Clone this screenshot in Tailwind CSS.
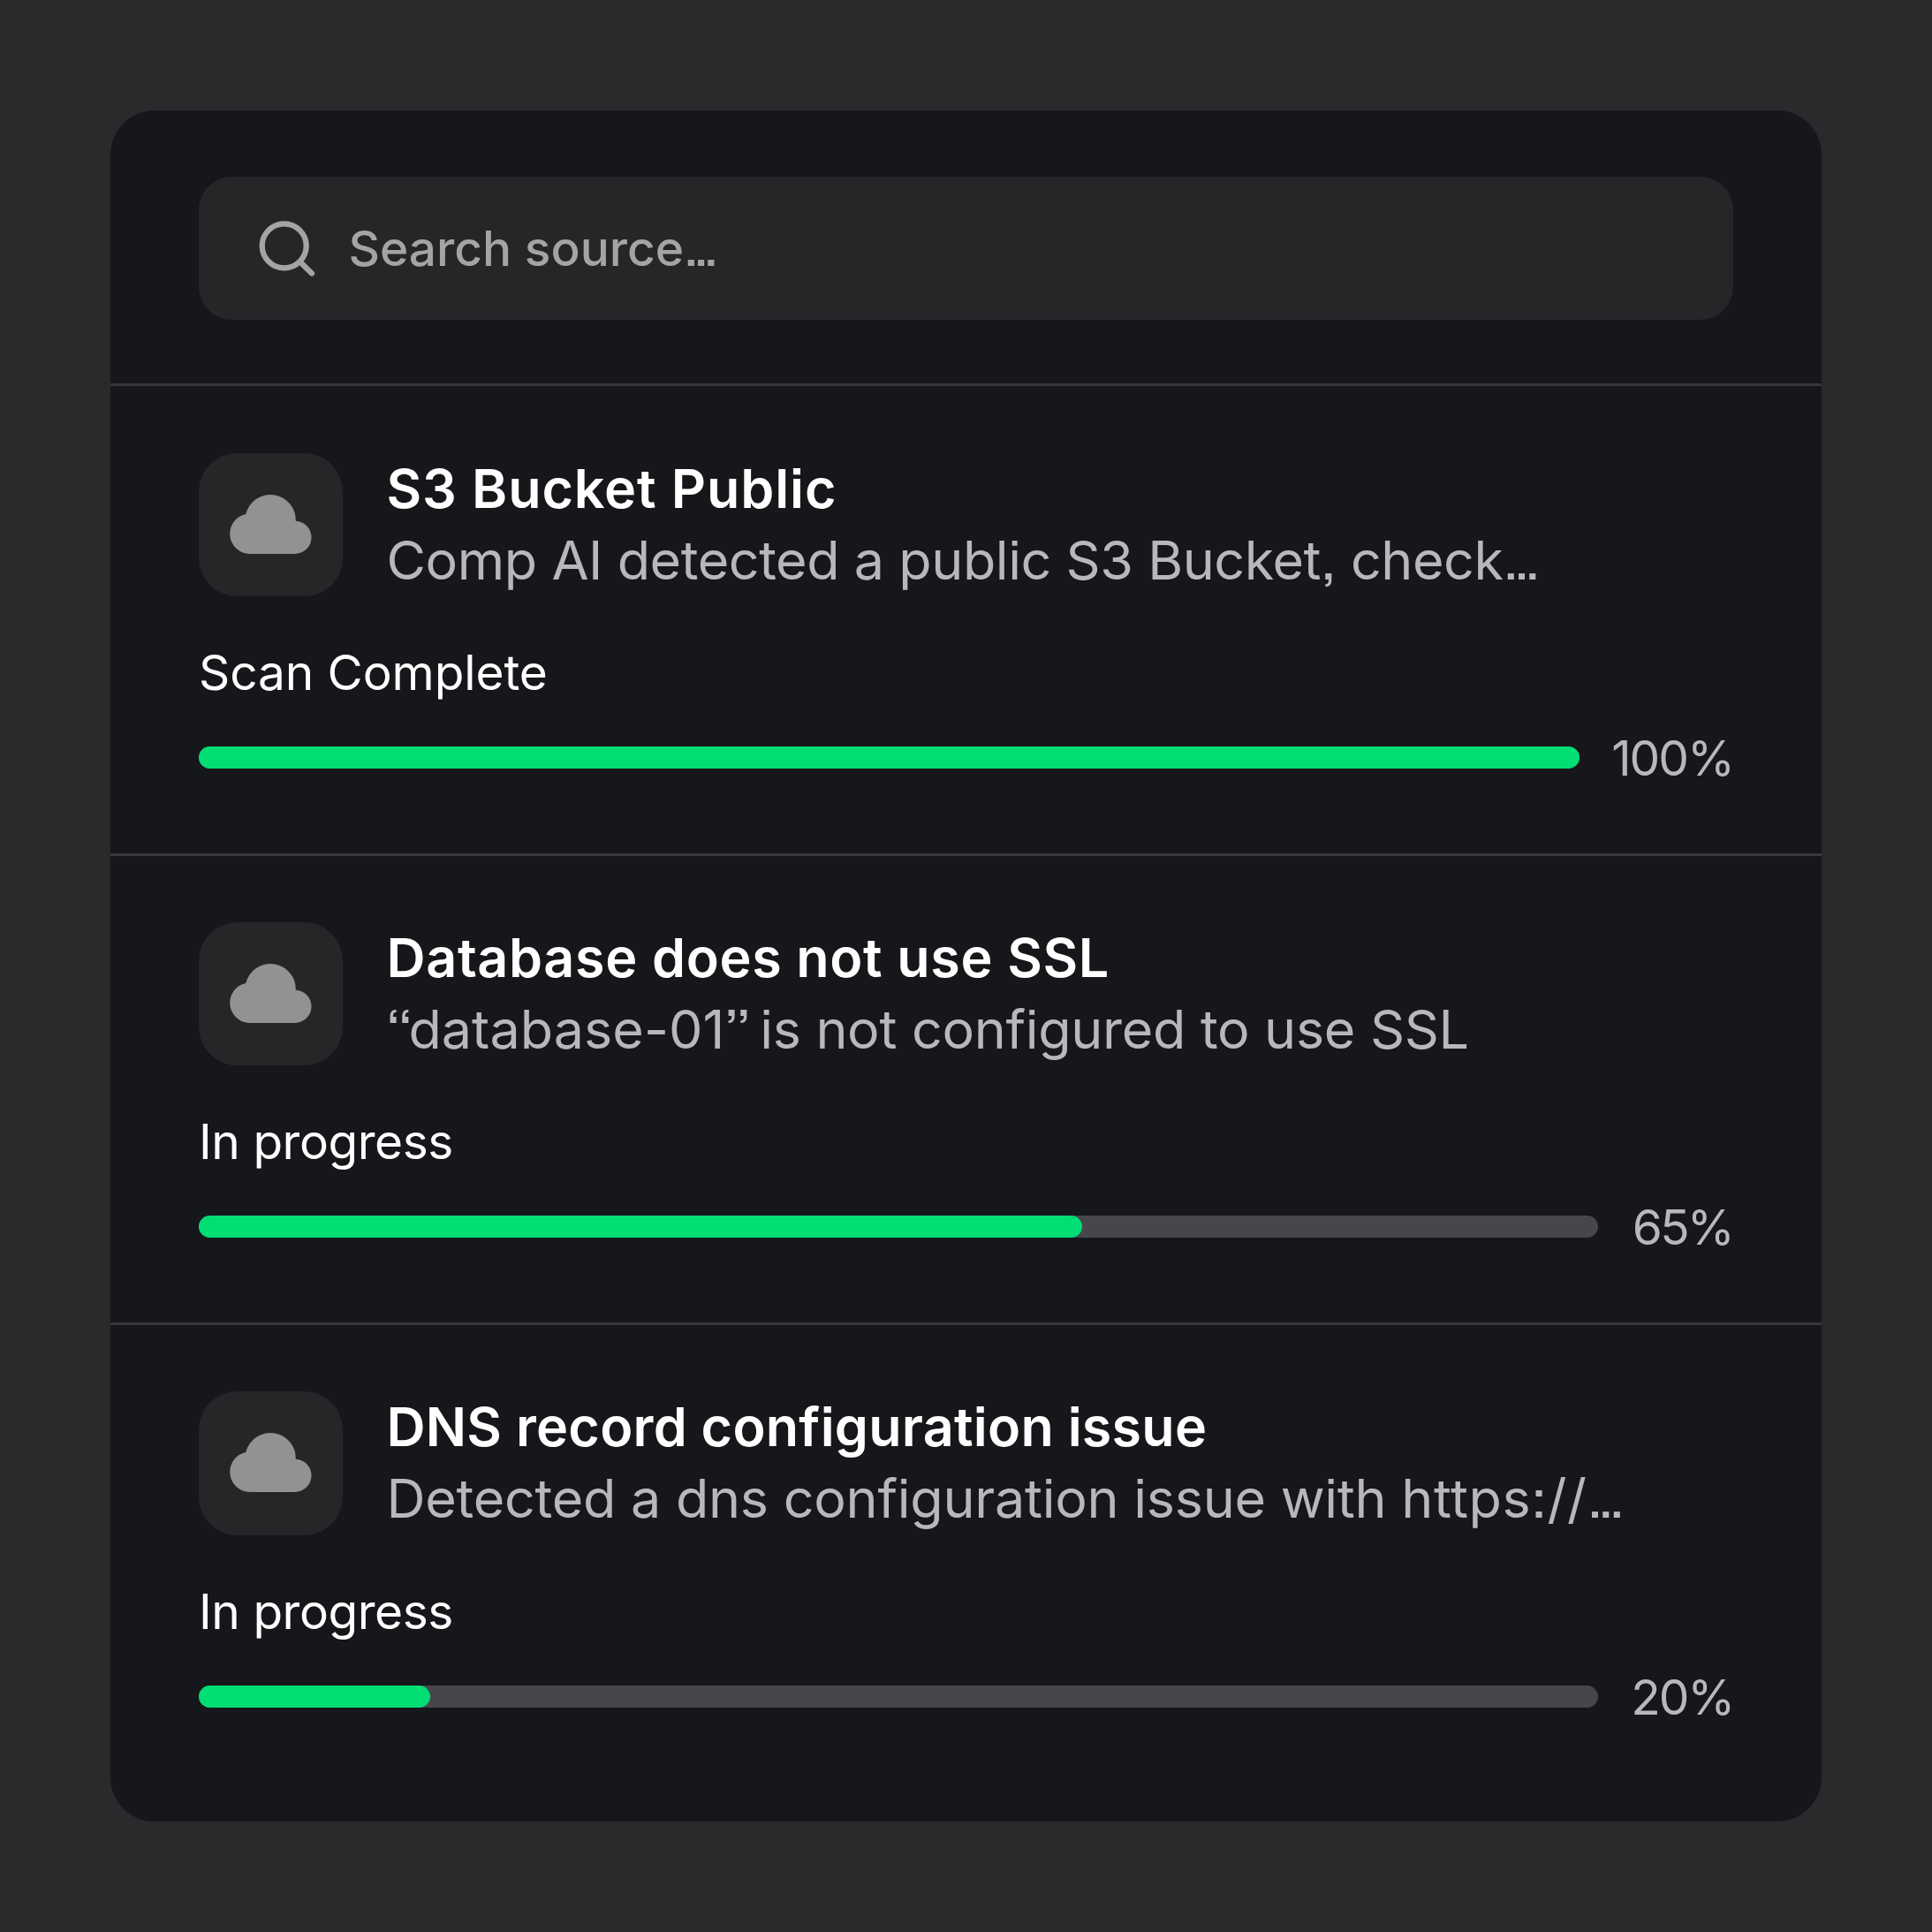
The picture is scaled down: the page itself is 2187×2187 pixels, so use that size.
<!DOCTYPE html>
<html lang="en">
<head>
<meta charset="utf-8">
<title>Sources</title>
<script src="https://cdn.jsdelivr.net/npm/@tailwindcss/browser@4"></script>
</head>
<body class="bg-[#292a2c] font-['Inter',sans-serif] [font-feature-settings:'ss07','ss08']">
<svg class="hidden">
  <symbol id="cloud" viewBox="0 0 100 100">
    <path d="M26.8 82.9a22.7 22.7 0 0 1-4.6-44.9a28.7 28.7 0 0 1 56.6 7.7a18.6 18.6 0 0 1-1.8 37.2z"/>
  </symbol>
</svg>
<main class="flex h-[2187px] w-[2187px] p-[125px]">
  <section class="h-[1937px] w-[1937px] shrink-0 overflow-hidden rounded-[50px] bg-[#16171a]">
    <header class="h-[312px] border-b-[3px] border-[#37383b] px-[100px] pt-[75px]">
      <div class="flex h-[162px] items-center gap-[32px] rounded-[37.5px] bg-[#252628] pl-[62.5px] text-[#a4a4a6]">
        <svg class="size-[75px]" viewBox="0 0 75 75" fill="none" stroke="currentColor" stroke-width="6.25" stroke-linecap="round"><circle cx="33.7" cy="34.3" r="25"/><path d="M51.5 52.2 65 65.5"/></svg>
        <span class="text-[55px] font-medium">Search source<span class="tracking-[-5.5px]">...</span></span>
      </div>
    </header>

    <article class="mt-[0.5px] h-[531.25px] border-b-[3px] border-[#37383b] px-[100px] pt-[75px]">
      <div class="flex gap-[50px]">
        <div class="flex size-[162.5px] shrink-0 items-center justify-center rounded-[43.75px] bg-[#252628]"><svg class="size-[100px] fill-[#929294]"><use href="#cloud"/></svg></div>
        <div class="whitespace-nowrap text-[61px] leading-[81.25px]">
          <h2 class="font-semibold tracking-[0.9px] text-white">S3 Bucket Public</h2>
          <p class="tracking-[-0.44px] text-[#b8b8ba]">Comp AI detected a public S3 Bucket, check<span class="tracking-[-5.3px]">...</span></p>
        </div>
      </div>
      <p class="mt-[49px] text-[55px] leading-[75px] tracking-[-0.1px] text-white">Scan Complete</p>
      <div class="mt-[21px] flex h-[75px] items-center">
        <div class="h-[25px] w-[1562.5px] rounded-full bg-[#47474b]"><div class="h-full rounded-full bg-[#00de74]" style="width:100%"></div></div>
        <span class="ml-auto pt-[2px] text-[55px] leading-[75px] tracking-[-2px] text-[#b8b8ba]">100%</span>
      </div>
    </article>

    <article class="h-[531.25px] border-b-[3px] border-[#37383b] px-[100px] pt-[75px]">
      <div class="flex gap-[50px]">
        <div class="flex size-[162.5px] shrink-0 items-center justify-center rounded-[43.75px] bg-[#252628]"><svg class="size-[100px] fill-[#929294]"><use href="#cloud"/></svg></div>
        <div class="whitespace-nowrap text-[61px] leading-[81.25px]">
          <h2 class="font-semibold tracking-[0.65px] text-white">Database does not use SSL</h2>
          <p class="tracking-[-0.3px] text-[#b8b8ba]"><span class="tracking-[-4px]">“</span><span class="tracking-[0.05px]">database-01</span><span class="tracking-[-6px]">”</span> is not configured to use SSL</p>
        </div>
      </div>
      <p class="mt-[49px] text-[55px] leading-[75px] tracking-[-0.45px] text-white">In progress</p>
      <div class="mt-[21px] flex h-[75px] items-center">
        <div class="h-[25px] w-[1584px] rounded-full bg-[#47474b]"><div class="h-full rounded-full bg-[#00de74]" style="width:63.1%"></div></div>
        <span class="ml-auto pt-[2px] pr-px text-[55px] leading-[75px] tracking-[-2.8px] text-[#b8b8ba]">65%</span>
      </div>
    </article>

    <article class="h-[531.25px] px-[100px] pt-[75px]">
      <div class="flex gap-[50px]">
        <div class="flex size-[162.5px] shrink-0 items-center justify-center rounded-[43.75px] bg-[#252628]"><svg class="size-[100px] fill-[#929294]"><use href="#cloud"/></svg></div>
        <div class="whitespace-nowrap text-[61px] leading-[81.25px]">
          <h2 class="font-semibold tracking-[0.25px] text-white">DNS record configuration issue</h2>
          <p class="tracking-[-0.25px] text-[#b8b8ba]">Detected a dns configuration issue with <span class="tracking-[0.6px]">https://</span><span class="tracking-[-5.2px]">...</span></p>
        </div>
      </div>
      <p class="mt-[49px] text-[55px] leading-[75px] tracking-[-0.45px] text-white">In progress</p>
      <div class="mt-[21px] flex h-[75px] items-center">
        <div class="h-[25px] w-[1584px] rounded-full bg-[#47474b]"><div class="h-full rounded-full bg-[#00de74]" style="width:16.55%"></div></div>
        <span class="ml-auto pt-[2px] text-[55px] leading-[75px] tracking-[-2.2px] text-[#b8b8ba]">20%</span>
      </div>
    </article>
  </section>
</main>
</body>
</html>
